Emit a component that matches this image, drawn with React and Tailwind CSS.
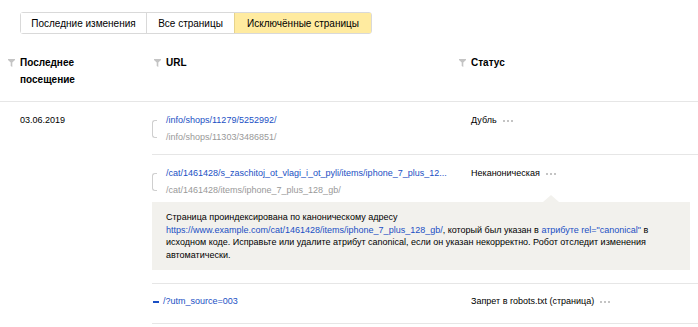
import { useState } from "react";

function Funnel() {
  return (
    <svg width="7" height="8" viewBox="0 0 7 8" className="mt-[5px] shrink-0">
      <path d="M0 0H7V1L4.3 3.6V8L2.7 7V3.6L0 1Z" fill="#c4c4c4" />
    </svg>
  );
}

function Dots() {
  return (
    <span className="inline-flex items-center gap-[2px] ml-[6px] align-middle">
      <span className="w-[2px] h-[2px] rounded-full bg-[#b0b0b0]" />
      <span className="w-[2px] h-[2px] rounded-full bg-[#b0b0b0]" />
      <span className="w-[2px] h-[2px] rounded-full bg-[#b0b0b0]" />
    </span>
  );
}

function Bracket() {
  return (
    <div className="w-[14px] shrink-0">
      <div className="mt-[8px] w-[5px] h-[18px] border border-r-0 border-[#cfcfcf] rounded-l-[3px]" />
    </div>
  );
}

const tabs = ["Последние изменения", "Все страницы", "Исключённые страницы"];
const tabWidths = ["w-[125px]", "w-[88px]", "w-[137px]"];

export default function App() {
  const [active, setActive] = useState(2);

  return (
    <div className="w-[698px] h-[327px] overflow-hidden bg-white text-black font-['Liberation_Sans',Arial,sans-serif]">
      <div className="pt-[12px] pl-[20px] flex">
        <div className="flex h-[22px] border border-[#d9d9d9] rounded-[3px] text-[10px]">
          {tabs.map((t, i) => (
            <button
              key={t}
              onClick={() => setActive(i)}
              className={`${tabWidths[i]} flex items-center justify-center ${i > 0 ? "border-l border-[#d9d9d9]" : ""} ${
                active === i ? "bg-[#ffeba0] border-[#e6d38c]" : "bg-white"
              }`}
            >
              {t}
            </button>
          ))}
        </div>
      </div>

      {/* header */}
      <div className="mt-[20px] pl-[6px] flex border-b border-[#e6e6e6] h-[48px] text-[10px] font-bold leading-[17px]">
        <div className="w-[146px] flex pl-[2px] gap-[5px]">
          <Funnel />
          <div>
            Последнее
            <br />
            посещение
          </div>
        </div>
        <div className="w-[305px] flex pl-[2px] gap-[5px]">
          <Funnel />
          <div>URL</div>
        </div>
        <div className="flex pl-[2px] gap-[5px]">
          <Funnel />
          <div>Статус</div>
        </div>
      </div>

      {/* row 1 */}
      <div className="pl-[6px] flex text-[9px] leading-[17px]">
        <div className="w-[146px] pl-[14px] pt-[10px]">03.06.2019</div>
        <div className="flex-1 flex border-b border-[#e6e6e6] pt-[10px] pb-[8px]">
          <div className="w-[305px] flex">
            <Bracket />
            <div>
              <div className="text-[#1a4fc4]">/info/shops/11279/5252992/</div>
              <div className="text-[#999]">/info/shops/11303/3486851/</div>
            </div>
          </div>
          <div className="pl-[14px]">
            Дубль
            <Dots />
          </div>
        </div>
      </div>

      {/* row 2 */}
      <div className="pl-[6px] flex text-[9px] leading-[17px]">
        <div className="w-[146px]" />
        <div className="flex-1 border-b border-[#e6e6e6] pt-[10px] pb-[13px]">
          <div className="flex">
            <div className="w-[305px] flex">
              <Bracket />
              <div>
                <div className="text-[#1a4fc4]">/cat/1461428/s_zaschitoj_ot_vlagi_i_ot_pyli/items/iphone_7_plus_12...</div>
                <div className="text-[#999]">/cat/1461428/items/iphone_7_plus_128_gb/</div>
              </div>
            </div>
            <div className="pl-[14px]">
              Неканоническая
              <Dots />
            </div>
          </div>
          <div className="relative mt-[3px] mr-[8px] bg-[#f2f1ed] pl-[14px] pr-[20px] pt-[9px] pb-[9px] leading-[12.5px]">
            <div className="absolute -top-[7px] left-[391px] w-0 h-0 border-l-[8px] border-r-[8px] border-b-[7px] border-l-transparent border-r-transparent border-b-[#f2f1ed]" />
            Страница проиндексирована по каноническому адресу
            <br />
            <span className="text-[#1a4fc4]">https://www.example.com/cat/1461428/items/iphone_7_plus_128_gb/</span>, который был указан в{" "}
            <span className="text-[#1a4fc4]">атрибуте rel="canonical"</span> в исходном коде. Исправьте или удалите атрибут canonical, если он указан некорректно. Робот отследит изменения автоматически.
          </div>
        </div>
      </div>

      {/* row 3 */}
      <div className="pl-[6px] flex text-[9px] leading-[17px]">
        <div className="w-[146px]" />
        <div className="flex-1 flex border-b border-[#e6e6e6] pt-[9px] pb-[13px]">
          <div className="w-[305px] flex items-center">
            <div className="w-[11px] shrink-0 pl-[1px]">
              <div className="w-[6px] h-[2px] bg-[#1a4fc4]" />
            </div>
            <div className="text-[#1a4fc4]">/?utm_source=003</div>
          </div>
          <div className="pl-[14px]">
            Запрет в robots.txt (страница)
            <Dots />
          </div>
        </div>
      </div>
    </div>
  );
}
